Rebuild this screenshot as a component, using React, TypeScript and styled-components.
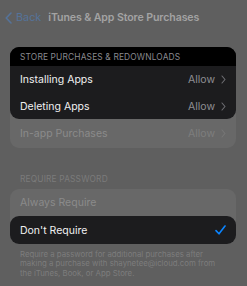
import styled, { createGlobalStyle } from 'styled-components';

const GlobalStyle = createGlobalStyle`
  html, body {
    margin: 0;
    padding: 0;
    background: #5f5f5f;
  }
  body {
    font-family: Inter, "Noto Sans", "Liberation Sans", sans-serif;
    -webkit-font-smoothing: antialiased;
  }
`;

const Screen = styled.div`
  width: 247px;
  height: 286px;
  overflow: hidden;
  background: #5f5f5f;
  display: flex;
  flex-direction: column;
`;

const NavBar = styled.div`
  height: 35px;
  display: flex;
  align-items: center;
  padding: 0 0 0 5px;
  gap: 7px;
`;

const BackButton = styled.div`
  display: flex;
  align-items: center;
  gap: 4px;
  color: #55739a;
  font-size: 10.8px;

  svg {
    display: block;
  }
`;

const Title = styled.div`
  color: #a3a3a3;
  font-size: 10.6px;
  font-weight: 600;
  letter-spacing: -0.1px;
`;

const Content = styled.div`
  padding: 12px 11px 0 10px;
  display: flex;
  flex-direction: column;
`;

const Group = styled.div`
  background: #686868;
  border-radius: 9px;
  display: flex;
  flex-direction: column;
`;

const Highlight = styled.div`
  background: #1c1c1e;
  border-radius: 9px;
  overflow: hidden;
  display: flex;
  flex-direction: column;
`;

const SectionHeader = styled.div<{ $dim?: boolean }>`
  height: ${({ $dim }) => ($dim ? '16px' : '19px')};
  display: flex;
  align-items: center;
  padding: 0 10px;
  background: ${({ $dim }) => ($dim ? 'transparent' : '#000')};
  color: ${({ $dim }) => ($dim ? '#7b7b7b' : '#8a8a8f')};
  font-size: 8.4px;
  letter-spacing: 0.15px;
  text-transform: uppercase;
`;

const Row = styled.div<{ $dim?: boolean; $h?: number }>`
  height: ${({ $h }) => $h ?? 27}px;
  display: flex;
  align-items: center;
  justify-content: space-between;
  padding: 0 10px;
  color: ${({ $dim }) => ($dim ? '#8b8b8b' : '#f0f0f0')};
  font-size: 10.5px;
`;

const Detail = styled.div<{ $dim?: boolean }>`
  display: flex;
  align-items: center;
  gap: 6px;
  color: ${({ $dim }) => ($dim ? '#7e7e7e' : '#8e8e93')};
`;

const Spacer = styled.div<{ $h: number }>`
  height: ${({ $h }) => $h}px;
`;

const Footer = styled.div`
  padding: 6px 10px 0;
  color: #7d7d7d;
  font-size: 7.8px;
  line-height: 9.3px;
  white-space: nowrap;
`;

const Chevron = ({ color }: { color: string }) => (
  <svg width="5" height="9" viewBox="0 0 5 9" fill="none">
    <path d="M1 1l3 3.5L1 8" stroke={color} strokeWidth="1.1" strokeLinecap="round" strokeLinejoin="round" />
  </svg>
);

const BackChevron = () => (
  <svg width="7" height="12" viewBox="0 0 7 12" fill="none">
    <path d="M6 1L1.2 6 6 11" stroke="#55739a" strokeWidth="1.6" strokeLinecap="round" strokeLinejoin="round" />
  </svg>
);

const Check = () => (
  <svg width="11" height="10" viewBox="0 0 11 10" fill="none">
    <path d="M1 5.6l3 3.2L10 1" stroke="#0a84ff" strokeWidth="1.6" strokeLinecap="round" strokeLinejoin="round" />
  </svg>
);

export default function App() {
  return (
    <Screen>
      <GlobalStyle />
      <NavBar>
        <BackButton>
          <BackChevron />
          <span>Back</span>
        </BackButton>
        <Title>iTunes &amp; App Store Purchases</Title>
      </NavBar>

      <Content>
        <Group>
          <Highlight>
            <SectionHeader>Store Purchases &amp; Redownloads</SectionHeader>
            <Row>
              <span>Installing Apps</span>
              <Detail>
                Allow <Chevron color="#6e6e73" />
              </Detail>
            </Row>
            <Row $h={26}>
              <span>Deleting Apps</span>
              <Detail>
                Allow <Chevron color="#6e6e73" />
              </Detail>
            </Row>
          </Highlight>
          <Row $dim $h={29}>
            <span>In-app Purchases</span>
            <Detail $dim>
              Allow <Chevron color="#767676" />
            </Detail>
          </Row>
        </Group>

        <Spacer $h={23} />
        <SectionHeader $dim>Require Password</SectionHeader>
        <Spacer $h={2} />

        <Group>
          <Row $dim $h={27}>
            <span>Always Require</span>
          </Row>
          <Highlight>
            <Row $h={28}>
              <span>Don&apos;t Require</span>
              <Check />
            </Row>
          </Highlight>
        </Group>

        <Footer>
          Require a password for additional purchases after
          <br />
          making a purchase with shaynetee@icloud.com from
          <br />
          the iTunes, Book, or App Store.
        </Footer>
      </Content>
    </Screen>
  );
}
